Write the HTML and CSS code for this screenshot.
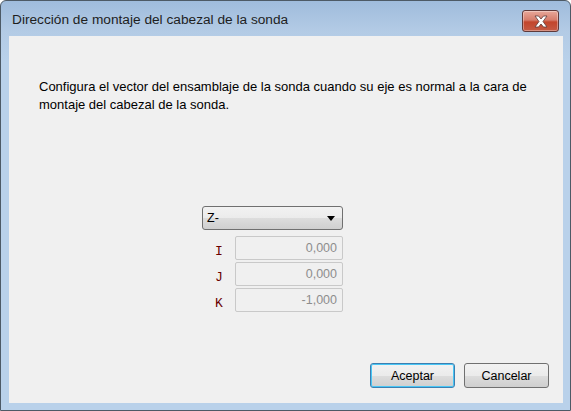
FILE: index.html
```html
<!DOCTYPE html>
<html lang="es">
<head>
    <meta charset="UTF-8">
    <title>Dirección de montaje del cabezal de la sonda</title>
    <link rel="stylesheet" href="styles.css">
</head>
<body>
    <div class="window">
        <div class="titlebar">
            <span class="title">Dirección de montaje del cabezal de la sonda</span>
            <button class="close-btn" aria-label="Cerrar">
                <svg width="16" height="13" viewBox="0 0 16 13">
                    <path d="M2 1 L5.5 1 L8 4 L10.5 1 L14 1 L10 6.5 L14 12 L10.5 12 L8 9 L5.5 12 L2 12 L6 6.5 Z" fill="#fff" stroke="#5a3a3a" stroke-width="0.8" stroke-linejoin="round"/>
                </svg>
            </button>
        </div>
        <div class="client">
            <p class="intro">Configura el vector del ensamblaje de la sonda cuando su eje es normal a la cara de montaje del cabezal de la sonda.</p>

            <div class="vector-form">
                <div class="combo">
                    <span>Z-</span>
                    <span class="arrow"></span>
                </div>
                <div class="fields">
                    <label class="axis">I</label>
                    <input class="field" type="text" value="0,000" disabled>
                    <label class="axis">J</label>
                    <input class="field" type="text" value="0,000" disabled>
                    <label class="axis">K</label>
                    <input class="field" type="text" value="-1,000" disabled>
                </div>
            </div>

            <div class="actions">
                <button class="btn btn-default">Aceptar</button>
                <button class="btn">Cancelar</button>
            </div>
        </div>
    </div>
</body>
</html>
```

FILE: styles.css
```css
body {
    margin: 0;
    width: 571px;
    height: 411px;
    font-family: "Liberation Sans", Arial, sans-serif;
    background-color: #ffffff;
}
.window {
    width: 571px;
    height: 411px;
    box-sizing: border-box;
    border: 1px solid #4d5a66;
    border-radius: 6px 6px 0 0;
    background: linear-gradient(to bottom, #9fbcdc 0px, #b3cbe5 30px, #b9d1ea 60px);
    display: flex;
    flex-direction: column;
}
.titlebar {
    height: 35px;
    display: flex;
    align-items: flex-start;
    justify-content: space-between;
    padding: 0 11px 0 11px;
}
.title {
    margin-top: 11px;
    font-size: 13.7px;
    color: #1e1e1e;
}
.close-btn {
    margin-top: 9px;
    width: 37px;
    height: 22px;
    padding: 0;
    border: 1px solid #5f3a3a;
    border-radius: 3px;
    background: linear-gradient(to bottom, #e8a89a 0%, #d67d6c 45%, #c2452c 55%, #c55a44 100%);
    display: flex;
    align-items: center;
    justify-content: center;
    box-shadow: inset 0 0 0 1px rgba(255,255,255,0.35);
}
.client {
    margin: 0 7px 7px 8px;
    flex: 1;
    background-color: #f0f0f0;
    display: flex;
    flex-direction: column;
}
.intro {
    margin: 42px 0 0 30px;
    width: 500px;
    font-size: 13px;
    line-height: 18px;
    color: #000000;
}
.vector-form {
    margin: 92px 0 0 193px;
    width: 141px;
}
.combo {
    box-sizing: border-box;
    height: 24px;
    margin-bottom: 6px;
    border: 1px solid #707070;
    border-radius: 3px;
    background: linear-gradient(to bottom, #f2f2f2 0%, #ebebeb 50%, #dddddd 51%, #cfcfcf 100%);
    display: flex;
    align-items: center;
    justify-content: space-between;
    padding: 0 7px 0 4px;
    font-size: 12.5px;
    color: #000;
}
.arrow {
    width: 0;
    height: 0;
    border-left: 4px solid transparent;
    border-right: 4px solid transparent;
    border-top: 5px solid #000;
}
.fields {
    display: grid;
    grid-template-columns: 33px 108px;
    grid-auto-rows: 24px;
    row-gap: 2px;
}
.axis {
    font-family: "Liberation Mono", "DejaVu Sans Mono", monospace;
    font-size: 13px;
    color: #6a0000;
    padding: 8px 0 0 13px;
}
.field {
    box-sizing: border-box;
    height: 24px;
    width: 108px;
    border: 1px solid #c9c9c9;
    border-radius: 2px;
    background-color: #f0f0f0;
    text-align: right;
    padding: 0 5px;
    font-family: "Liberation Sans", Arial, sans-serif;
    font-size: 12.5px;
    color: #8d8d8d;
}
.actions {
    margin-top: auto;
    margin-bottom: 15px;
    padding-right: 14px;
    display: flex;
    justify-content: flex-end;
    gap: 9px;
}
.btn {
    width: 85px;
    height: 25px;
    border: 1px solid #707070;
    border-radius: 3px;
    background: linear-gradient(to bottom, #f2f2f2 0%, #ebebeb 50%, #dddddd 51%, #cfcfcf 100%);
    font-family: "Liberation Sans", Arial, sans-serif;
    font-size: 12.5px;
    color: #000;
    padding: 0;
}
.btn-default {
    border-color: #3c7fb1;
    box-shadow: inset 0 0 0 1px #48c6f5;
}
```
